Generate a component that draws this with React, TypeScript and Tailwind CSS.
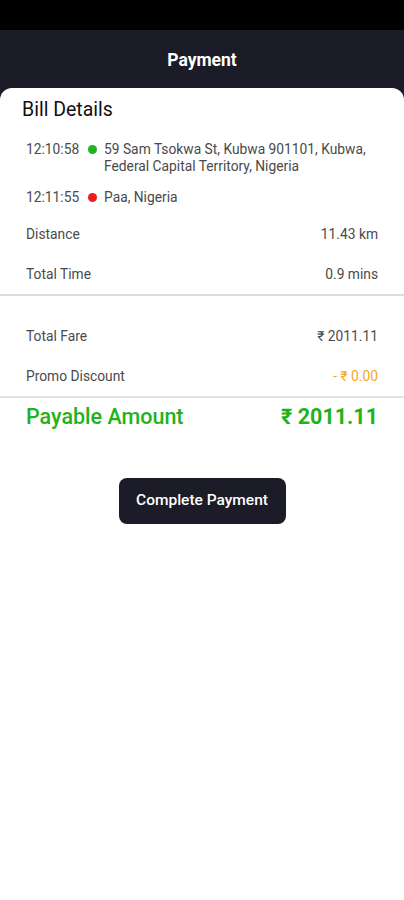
import React from 'react';

const font = { fontFamily: 'Roboto, "Noto Sans", "Liberation Sans", sans-serif' };

const Row: React.FC<{ label: string; value: string; valueClass?: string }> = ({ label, value, valueClass }) => (
  <div className="h-[40px] flex items-center justify-between pl-[26px] pr-[26px] text-[13.8px]">
    <span className="text-[#4a4a4a]">{label}</span>
    <span className={valueClass || 'text-[#4a4a4a]'}>{value}</span>
  </div>
);

export default function App() {
  return (
    <div className="w-[404px] min-h-[900px] bg-white" style={font}>
      <div className="h-[30px] bg-black" />
      <div className="h-[58px] bg-[#1b1c27] flex items-center justify-center pt-[2px]">
        <span className="text-white font-bold text-[17.5px]">Payment</span>
      </div>
      <div className="bg-[#1b1c27]">
        <div className="bg-white rounded-t-[12px] pt-[10px]">
          <h2 className="px-[22px] text-[19.5px] leading-[24px] text-[#111]">Bill Details</h2>
          <div className="mt-[19px] pl-[26px] pr-[22px] text-[13.8px] leading-[17px] text-[#4a4a4a]">
            <div className="flex">
              <span className="w-[62px] shrink-0">12:10:58</span>
              <span className="w-[9px] h-[9px] rounded-full bg-[#1fb51b] mt-[4px] mr-[7px] shrink-0" />
              <span>59 Sam Tsokwa St, Kubwa 901101, Kubwa, Federal Capital Territory, Nigeria</span>
            </div>
            <div className="flex mt-[14px]">
              <span className="w-[62px] shrink-0">12:11:55</span>
              <span className="w-[9px] h-[9px] rounded-full bg-[#ee1c1c] mt-[4px] mr-[7px] shrink-0" />
              <span>Paa, Nigeria</span>
            </div>
          </div>
          <div className="mt-[8px]">
            <Row label="Distance" value="11.43 km" />
            <Row label="Total Time" value="0.9 mins" />
          </div>
          <div className="h-[2px] bg-[#dcdcdc]" />
          <div className="mt-[20px]">
            <Row label="Total Fare" value="₹ 2011.11" />
            <Row label="Promo Discount" value="- ₹ 0.00" valueClass="text-[#f2a51f]" />
          </div>
          <div className="h-[2px] bg-[#e2e2e2]" />
          <div className="h-[38px] flex items-center justify-between pl-[26px] pr-[26px] text-[21.5px] text-[#1fb31b]">
            <span className="font-medium">Payable Amount</span>
            <span className="font-bold">₹ 2011.11</span>
          </div>
          <div className="flex justify-center mt-[42px]">
            <button className="w-[167px] h-[46px] rounded-[8px] bg-[#1b1c27] text-white text-[15.5px] font-medium">
              Complete Payment
            </button>
          </div>
        </div>
      </div>
    </div>
  );
}
